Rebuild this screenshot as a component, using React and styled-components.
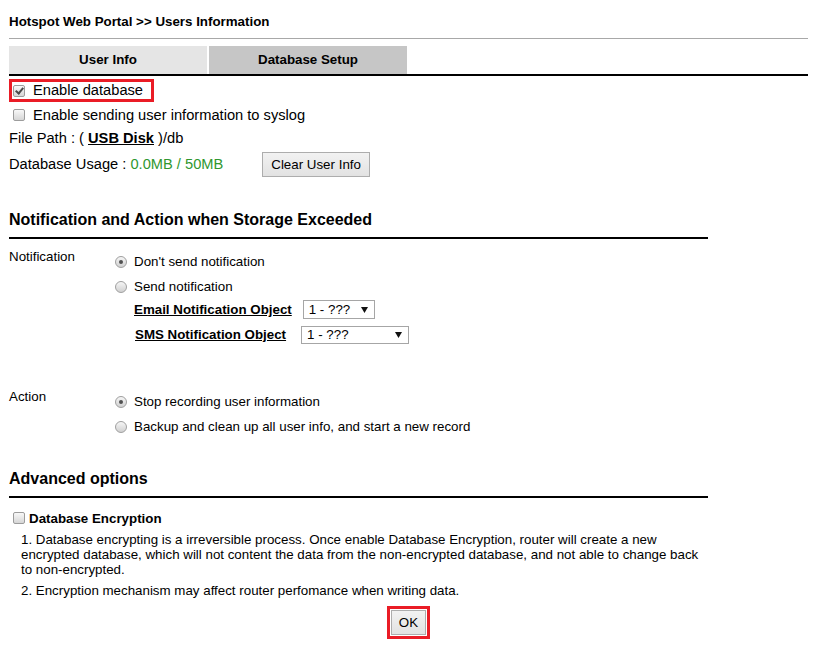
import React from 'react';
import styled, { createGlobalStyle } from 'styled-components';

const GlobalStyle = createGlobalStyle`
body {
  margin: 0;
  background: #ffffff;
  font-family: "Liberation Sans", Arial, sans-serif;
  color: #000000;
}
`;

const Page = styled.div`
width: 799px;
padding: 14px 0 0 9px;
`;

const PageTitle = styled.div`
font-size: 13.33px;
font-weight: bold;
line-height: 16px;
`;

const Divider = styled.div`
margin-top: 8px;
height: 1px;
background: #a8a8a8;
`;

const TabBar = styled.div`
margin-top: 7px;
display: flex;
gap: 2px;
border-bottom: 2px solid #000000;
`;

const Tab = styled.div`
width: 198px;
height: 28px;
display: flex;
align-items: center;
justify-content: center;
padding-bottom: 1px;
box-sizing: border-box;
font-size: 13.33px;
font-weight: bold;
background: ${props => (props.active ? '#c6c6c6' : '#e5e5e5')};
`;

const Highlight = styled.div`
display: inline-flex;
justify-content: center;
align-items: center;
border: 3px solid #ea1c26;
padding: ${props => props.pad || '0 8px 0 1px'};
`;

const BigRow = styled.div`
display: flex;
align-items: center;
height: ${props => props.h || 24}px;
margin-top: ${props => props.mt || 0}px;
padding-left: ${props => props.pl || 0}px;
font-size: 14.67px;
line-height: 17px;
`;

const Box = styled.input.attrs({ type: 'checkbox', readOnly: true })`
appearance: none;
position: relative;
width: 12px;
height: 12px;
margin: 0 ${props => props.gap || 8}px 0 0;
border: 1px solid #9c9c9c;
border-radius: 2px;
background: linear-gradient(to bottom, #f8f8f8 0%, #d6d6d6 100%);
flex: none;
&:checked::after {
  content: '';
  position: absolute;
  left: 3px;
  top: 0px;
  width: 3px;
  height: 6px;
  border-right: 2px solid #4a4a4a;
  border-bottom: 2px solid #4a4a4a;
  transform: rotate(40deg);
}
`;

const Radio = styled.input.attrs({ type: 'radio', readOnly: true })`
appearance: none;
position: relative;
width: 12px;
height: 12px;
margin: 0 7px 0 0;
border: 1px solid #9f9f9f;
border-radius: 50%;
background: linear-gradient(to bottom, #f6f6f6 0%, #d0d0d0 100%);
flex: none;
&:checked::after {
  content: '';
  position: absolute;
  left: 3px;
  top: 3px;
  width: 4px;
  height: 4px;
  border-radius: 50%;
  background: #505050;
}
`;

const LinkText = styled.span`
font-weight: bold;
text-decoration: underline;
`;

const Usage = styled.span`
color: #2f972f;
`;

const Button = styled.button`
height: 25px;
padding: 0 ${props => props.px || 8}px;
margin-left: ${props => props.ml || 0}px;
font-family: "Liberation Sans", Arial, sans-serif;
font-size: 13.33px;
color: #000000;
border: 1px solid #adadad;
border-radius: 0;
background: linear-gradient(to bottom, #f2f2f2 0%, #e2e2e2 100%);
`;

const SectionHead = styled.div`
width: 699px;
margin-top: ${props => props.mt}px;
padding-bottom: 8px;
border-bottom: 2px solid #000000;
font-size: 16px;
font-weight: bold;
line-height: 19px;
`;

const Group = styled.div`
display: grid;
grid-template-columns: 106px 1fr;
margin-top: ${props => props.mt}px;
font-size: 13.33px;
`;

const GroupLabel = styled.div`
line-height: 16px;
`;

const Options = styled.div`
display: flex;
flex-direction: column;
`;

const OptionRow = styled.label`
display: flex;
align-items: center;
height: 25px;
`;

const ObjectRow = styled.div`
display: flex;
align-items: center;
height: 21px;
margin-top: ${props => props.mt || 0}px;
padding-left: ${props => props.pl}px;
`;

const SelectBox = styled.div`
display: flex;
align-items: center;
justify-content: space-between;
box-sizing: border-box;
width: ${props => props.w}px;
height: ${props => props.h}px;
margin-left: ${props => props.ml}px;
padding: 0 6px 0 5px;
border: 1px solid #a6a6a6;
background: #ffffff;
font-size: 13.33px;
`;

const Arrow = () => (
  <svg width="7" height="6" viewBox="0 0 7 6">
    <path d="M0 0 L7 0 L3.5 6 Z" fill="#111111" />
  </svg>
);

const EncRow = styled.label`
display: flex;
align-items: center;
height: 16px;
margin-top: 12px;
padding-left: 4px;
font-size: 13.33px;
font-weight: bold;
`;

const Note = styled.p`
width: 687px;
margin: ${props => props.mt}px 0 0 12px;
font-size: 13.33px;
line-height: 15px;
`;

const Footer = styled.div`
display: flex;
justify-content: center;
margin-top: 8px;
`;

const App = () => (
  <Page>
    <GlobalStyle />
    <PageTitle>Hotspot Web Portal &gt;&gt; Users Information</PageTitle>
    <Divider />
    <TabBar>
      <Tab>User Info</Tab>
      <Tab active>Database Setup</Tab>
    </TabBar>

    <BigRow h={23} mt={3}>
      <Highlight>
        <Box defaultChecked gap={8} />
        Enable database
      </Highlight>
    </BigRow>
    <BigRow mt={1} pl={4}>
      <Box gap={8} />
      Enable sending user information to syslog
    </BigRow>
    <BigRow h={23}>
      <span>
        File Path : ( <LinkText>USB Disk</LinkText> )/db
      </span>
    </BigRow>
    <BigRow h={25} mt={2}>
      <span>
        Database Usage : <Usage>0.0MB / 50MB</Usage>
      </span>
      <Button ml={39}>Clear User Info</Button>
    </BigRow>

    <SectionHead mt={33}>Notification and Action when Storage Exceeded</SectionHead>
    <Group mt={10}>
      <GroupLabel>Notification</GroupLabel>
      <Options>
        <OptionRow>
          <Radio name="notify" defaultChecked />
          Don't send notification
        </OptionRow>
        <OptionRow>
          <Radio name="notify" />
          Send notification
        </OptionRow>
        <ObjectRow pl={19}>
          <LinkText>Email Notification Object</LinkText>
          <SelectBox w={72} h={19} ml={11}>
            1 - ???
            <Arrow />
          </SelectBox>
        </ObjectRow>
        <ObjectRow pl={20} mt={4}>
          <LinkText>SMS Notification Object</LinkText>
          <SelectBox w={108} h={18} ml={15}>
            1 - ???
            <Arrow />
          </SelectBox>
        </ObjectRow>
      </Options>
    </Group>

    <Group mt={44}>
      <GroupLabel>Action</GroupLabel>
      <Options>
        <OptionRow>
          <Radio name="action" defaultChecked />
          Stop recording user information
        </OptionRow>
        <OptionRow>
          <Radio name="action" />
          Backup and clean up all user info, and start a new record
        </OptionRow>
      </Options>
    </Group>

    <SectionHead mt={30}>Advanced options</SectionHead>
    <EncRow>
      <Box gap={4} />
      Database Encryption
    </EncRow>
    <Note mt={6}>
      1. Database encrypting is a irreversible process. Once enable Database Encryption, router will create a new
      encrypted database, which will not content the data from the non-encrypted database, and not able to change back
      to non-encrypted.
    </Note>
    <Note mt={6}>2. Encryption mechanism may affect router perfomance when writing data.</Note>
    <Footer>
      <Highlight pad="1px">
        <Button px={7}>OK</Button>
      </Highlight>
    </Footer>
  </Page>
);

export default App;
